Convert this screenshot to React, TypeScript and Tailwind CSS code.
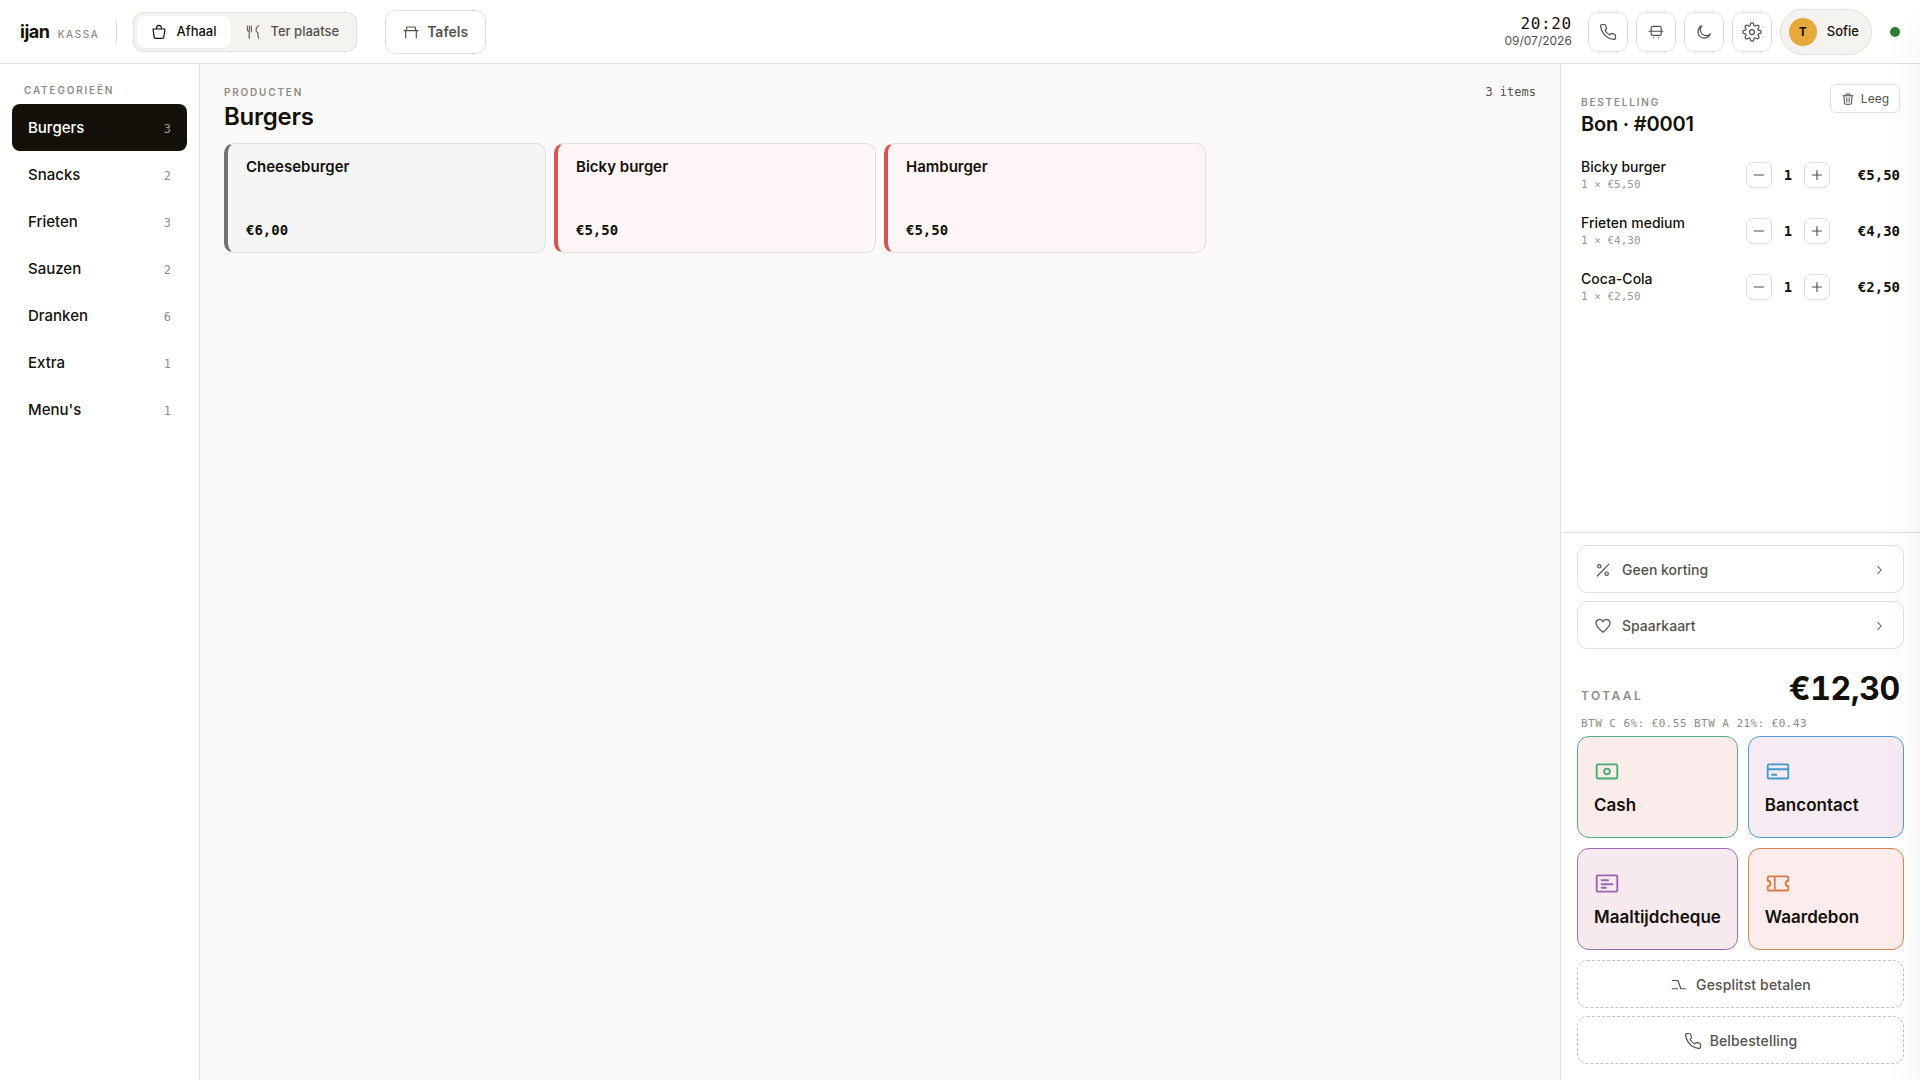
import React from "react";

const MONO = "font-['DejaVu_Sans_Mono',monospace]";

const categories = [
  { name: "Burgers", count: 3 },
  { name: "Snacks", count: 2 },
  { name: "Frieten", count: 3 },
  { name: "Sauzen", count: 2 },
  { name: "Dranken", count: 6 },
  { name: "Extra", count: 1 },
  { name: "Menu's", count: 1 },
];

const products = [
  { name: "Cheeseburger", price: "€6,00", tone: "border-l-[#73716d] bg-[#f5f5f6]" },
  { name: "Bicky burger", price: "€5,50", tone: "border-l-[#d9534f] bg-[#fdf5f6]" },
  { name: "Hamburger", price: "€5,50", tone: "border-l-[#d9534f] bg-[#fdf5f6]" },
];

const lines = [
  { name: "Bicky burger", price: "€5,50" },
  { name: "Frieten medium", price: "€4,30" },
  { name: "Coca-Cola", price: "€2,50" },
];

type IconProps = { className?: string; children: React.ReactNode; width?: number };

function Icon({ className = "size-4", width = 1.5, children }: IconProps) {
  return (
    <svg
      viewBox="0 0 24 24"
      fill="none"
      stroke="currentColor"
      strokeWidth={width}
      strokeLinecap="round"
      strokeLinejoin="round"
      className={`shrink-0 ${className}`}
      aria-hidden="true"
    >
      {children}
    </svg>
  );
}

function PhoneIcon({ className = "size-[18px]" }: { className?: string }) {
  return (
    <Icon className={className} width={1.6}>
      <path d="M22 16.92v3a2 2 0 0 1-2.18 2 19.79 19.79 0 0 1-8.63-3.07 19.5 19.5 0 0 1-6-6 19.79 19.79 0 0 1-3.07-8.67A2 2 0 0 1 4.11 2h3a2 2 0 0 1 2 1.72 12.84 12.84 0 0 0 .7 2.81 2 2 0 0 1-.45 2.11L8.09 9.91a16 16 0 0 0 6 6l1.27-1.27a2 2 0 0 1 2.11-.45 12.84 12.84 0 0 0 2.81.7A2 2 0 0 1 22 16.92z" />
    </Icon>
  );
}

const payments = [
  {
    name: "Cash",
    tone: "border-[#4fb07a] bg-[#fbecec]",
    color: "text-[#45ad72]",
    icon: (
      <>
        <rect x="2.5" y="5" width="19" height="13" rx="1" />
        <circle cx="12" cy="11.5" r="2.6" />
      </>
    ),
  },
  {
    name: "Bancontact",
    tone: "border-[#4a9fd0] bg-[#f6ebf2]",
    color: "text-[#4499cc]",
    icon: (
      <>
        <rect x="2.5" y="5" width="19" height="13" rx="1" />
        <path d="M2.5 9.5h19M6.5 14.5h4" />
      </>
    ),
  },
  {
    name: "Maaltijdcheque",
    tone: "border-[#9b6fb8] bg-[#f6eaef]",
    color: "text-[#9666b5]",
    icon: (
      <>
        <rect x="2.5" y="4" width="19" height="15" rx="1" />
        <path d="M7 8.5h6M7 12.2h10M7 15.5h4" />
      </>
    ),
  },
  {
    name: "Waardebon",
    tone: "border-[#d98452] bg-[#fcecec]",
    color: "text-[#d97b45]",
    icon: (
      <>
        <path d="M2.5 6.5a1.5 1.5 0 0 1 1.5-1.5h16a1.5 1.5 0 0 1 1.5 1.5v2.5a2.5 2.5 0 0 0 0 5v2.5a1.5 1.5 0 0 1-1.5 1.5h-16a1.5 1.5 0 0 1-1.5-1.5v-2.5a2.5 2.5 0 0 0 0-5z" />
        <path d="M9 6.5v10" />
      </>
    ),
  },
];

const headerButtons = [
  { label: "Bellen", icon: <PhoneIcon /> },
  {
    label: "Printer",
    icon: (
      <Icon className="size-[18px]" width={1.6}>
        <path d="M5.5 11V7a2.5 2.5 0 0 1 2.5-2.5h8.5A2.5 2.5 0 0 1 19 7v4M2.7 11h18.6M5.5 11v3.5a2 2 0 0 0 2 2H17a2 2 0 0 0 2-2V11M8.5 19.8v.01M15.5 19.8v.01" />
      </Icon>
    ),
  },
  {
    label: "Donkere modus",
    icon: (
      <Icon className="size-[18px]" width={1.6}>
        <path d="M20.5 14.5A8.5 8.5 0 1 1 9.2 3.8a7.5 7.5 0 0 0 11.3 10.7z" />
      </Icon>
    ),
  },
  {
    label: "Instellingen",
    icon: (
      <Icon className="size-5">
        <circle cx="12" cy="12" r="3" />
        <path d="M19.4 15a1.65 1.65 0 0 0 .33 1.82l.06.06a2 2 0 1 1-2.83 2.83l-.06-.06a1.65 1.65 0 0 0-2.82 1.18V21a2 2 0 1 1-4 0v-.09A1.65 1.65 0 0 0 7.2 19.7l-.06.06a2 2 0 1 1-2.83-2.83l.06-.06A1.65 1.65 0 0 0 3.1 14H3a2 2 0 1 1 0-4h.09A1.65 1.65 0 0 0 4.3 7.2l-.06-.06a2 2 0 1 1 2.83-2.83l.06.06A1.65 1.65 0 0 0 10 3.09V3a2 2 0 1 1 4 0v.09a1.65 1.65 0 0 0 2.82 1.18l.06-.06a2 2 0 1 1 2.83 2.83l-.06.06A1.65 1.65 0 0 0 20.91 10H21a2 2 0 1 1 0 4h-.09a1.65 1.65 0 0 0-1.51 1z" />
      </Icon>
    ),
  },
];

function Header() {
  return (
    <header className="flex h-16 shrink-0 items-center border-b border-[#e2e0dc] bg-white px-5">
      <div className="flex items-baseline gap-2">
        <span className="text-lg font-bold tracking-tight">ijan</span>
        <span className="text-[10px] font-medium tracking-[0.16em] text-[#8f8c85]">KASSA</span>
      </div>
      <div className="ml-4 h-6 w-px bg-[#e2e0dc]" />
      <div className="ml-4 flex rounded-[10px] border border-[#e2e0dc] bg-[#f4f3f0] p-[3px]">
        <button className="flex h-8 items-center gap-[10px] rounded-lg bg-white px-[14px] text-[13px] font-medium shadow-xs">
          <Icon className="size-4" width={1.8}>
            <path d="M3 7.5h18l-1.8 12.2a2 2 0 0 1-2 1.8H6.8a2 2 0 0 1-2-1.8zM8.5 7.5V5.5a3.5 3.5 0 0 1 7 0v2" />
          </Icon>
          Afhaal
        </button>
        <button className="flex h-8 items-center gap-[10px] rounded-lg px-[14px] text-[13px] font-medium text-[#55524c]">
          <Icon className="size-4" width={1.6}>
            <path d="M3.5 3v5.5c0 2 1.5 2.5 3 3v2c-.5 2-.5 5 0 8M6.5 3v6.5M9.5 3v8.5M20.5 2.5c-3 1-4.5 5-3.5 8.5.3 1 1.5 1.5 2.5 2-.5 2.5 0 6 1 8.5" />
          </Icon>
          Ter plaatse
        </button>
      </div>
      <button className="ml-7 flex h-11 items-center gap-2 rounded-[10px] border border-[#e2e0dc] px-[17px] text-sm font-semibold text-[#55524c]">
        <Icon className="size-4" width={1.8}>
          <path d="M1.5 10h21M4 10v10.5M20 10v10.5M4.5 10l1.5-5.5h12l1.5 5.5" />
        </Icon>
        Tafels
      </button>

      <div className="ml-auto flex items-center">
        <div className="mr-4 flex flex-col items-end">
          <time className={`text-base leading-[18px] tracking-[0.04em] ${MONO}`}>20:20</time>
          <span className="text-xs leading-4 text-[#55524c]">09/07/2026</span>
        </div>
        <div className="flex items-center gap-2">
          {headerButtons.map((b) => (
            <button
              key={b.label}
              aria-label={b.label}
              className="grid size-10 place-items-center rounded-[10px] border border-[#e2e0dc] text-[#55524c]"
            >
              {b.icon}
            </button>
          ))}
          <button className="flex h-[46px] items-center gap-[10px] rounded-full border border-[#e2e0dc] bg-[#f4f3f0] pr-3 pl-2 text-[13px] font-medium">
            <span className="grid size-7 place-items-center rounded-full bg-[#e8a93c] text-xs font-bold">T</span>
            Sofie
          </button>
        </div>
        <span className="ml-[18px] size-[10px] rounded-full bg-[#2e7d32]" />
      </div>
    </header>
  );
}

function Sidebar() {
  return (
    <aside className="flex w-[200px] shrink-0 flex-col border-r border-[#e2e0dc] bg-white px-3 pt-[18px]">
      <h2 className="mb-[6px] px-3 text-[10px] leading-4 font-semibold tracking-[0.18em] text-[#8f8c85]">CATEGORIEËN</h2>
      <nav className="flex flex-col">
        {categories.map((c, i) => (
          <button
            key={c.name}
            className={`flex h-[47px] items-center justify-between rounded-lg px-4 pt-[2px] text-[15px] font-medium ${
              i === 0 ? "bg-[#14110b] text-white" : ""
            }`}
          >
            {c.name}
            <span className={`text-xs ${MONO} ${i === 0 ? "text-[#a09e99]" : "text-[#8f8c85]"}`}>{c.count}</span>
          </button>
        ))}
      </nav>
    </aside>
  );
}

function Products() {
  return (
    <main className="flex min-w-0 flex-1 flex-col bg-[#fbfaf9] px-6 pt-5">
      <div className="flex items-start justify-between">
        <div>
          <p className="text-[10px] leading-4 font-semibold tracking-[0.18em] text-[#8f8c85]">PRODUCTEN</p>
          <h1 className="text-2xl leading-[34px] font-semibold tracking-[-0.01em]">Burgers</h1>
        </div>
        <span className={`text-xs leading-4 text-[#55524c] ${MONO}`}>3 items</span>
      </div>
      <div className="mt-[9px] grid grid-cols-4 gap-2">
        {products.map((p) => (
          <button
            key={p.name}
            className={`flex h-[110px] flex-col items-start justify-between rounded-[10px] border border-l-4 border-[#e2e0dc] px-[18px] py-3 ${p.tone}`}
          >
            <span className="text-[15px] leading-[22px] font-semibold">{p.name}</span>
            <span className={`text-sm leading-5 font-bold ${MONO}`}>{p.price}</span>
          </button>
        ))}
      </div>
    </main>
  );
}

function Order() {
  return (
    <aside className="flex w-[360px] shrink-0 flex-col border-l border-[#e2e0dc] bg-white">
      <div className="flex items-start justify-between px-5 pt-5">
        <div className="pt-[10px]">
          <p className="text-[10px] leading-4 font-semibold tracking-[0.18em] text-[#8f8c85]">BESTELLING</p>
          <h2 className="text-xl leading-7 font-semibold tracking-[-0.01em]">Bon · #0001</h2>
        </div>
        <button className="flex h-[29px] items-center gap-[6px] rounded-md border border-[#e2e0dc] px-[10px] text-xs text-[#55524c]">
          <Icon className="size-[14px]" width={1.8}>
            <path d="M3.5 6.5h17M9 6.5V3.5h6v3M5 6.5l1 12.5a2 2 0 0 0 2 2h8a2 2 0 0 0 2-2l1-12.5M10 10v7M14 10v7" />
          </Icon>
          Leeg
        </button>
      </div>

      <ul className="flex min-h-0 flex-1 flex-col px-5 pt-[9px]">
        {lines.map((l) => (
          <li key={l.name} className="flex h-14 items-center">
            <div className="flex-1">
              <p className="text-sm leading-5 font-medium">{l.name}</p>
              <p className={`text-[11px] leading-4 text-[#9b9892] ${MONO}`}>1 × {l.price}</p>
            </div>
            <div className="flex items-center">
              <button aria-label={`Minder ${l.name}`} className="grid size-[26px] place-items-center rounded-md border border-[#e2e0dc] text-[#55524c]">
                <Icon className="size-3" width={2.4}><path d="M3 12h18" /></Icon>
              </button>
              <span className={`w-8 text-center text-sm font-bold ${MONO}`}>1</span>
              <button aria-label={`Meer ${l.name}`} className="grid size-[26px] place-items-center rounded-md border border-[#e2e0dc] text-[#55524c]">
                <Icon className="size-3" width={2.4}><path d="M3 12h18M12 3v18" /></Icon>
              </button>
            </div>
            <span className={`w-[70px] text-right text-sm font-bold ${MONO}`}>{l.price}</span>
          </li>
        ))}
      </ul>

      <div className="flex flex-col border-t border-[#e2e0dc] px-4 pt-3 pb-4">
        <div className="flex flex-col gap-2">
          <button className="flex h-12 items-center gap-[11px] rounded-[10px] border border-[#e2e0dc] px-[17px] pt-[2px] text-sm font-medium text-[#55524c]">
            <Icon className="size-4" width={1.8}>
              <path d="M20.5 3.5L3.5 21" />
              <circle cx="6.5" cy="6.5" r="2.5" />
              <circle cx="17.5" cy="17.5" r="2.5" />
            </Icon>
            <span className="flex-1 text-left">Geen korting</span>
            <Icon className="size-[14px]" width={1.8}><path d="M10 6l6 6-6 6" /></Icon>
          </button>
          <button className="flex h-12 items-center gap-[11px] rounded-[10px] border border-[#e2e0dc] px-[17px] pt-[2px] text-sm font-medium text-[#55524c]">
            <Icon className="size-4" width={1.8}>
              <path d="M12 21.5C8 18 1.5 13 1.5 8a5.5 5.5 0 0 1 10.5-2.5A5.5 5.5 0 0 1 22.5 8c0 5-6.5 10-10.5 13.5z" />
            </Icon>
            <span className="flex-1 text-left">Spaarkaart</span>
            <Icon className="size-[14px]" width={1.8}><path d="M10 6l6 6-6 6" /></Icon>
          </button>
        </div>
        <div className="mt-5 flex items-baseline justify-between px-1">
          <span className="text-xs font-semibold tracking-[0.2em] text-[#8f8c85]">TOTAAL</span>
          <span className="text-[32px] leading-10 font-bold tracking-[-0.01em] tabular-nums">€12,30</span>
        </div>
        <p className={`mt-[7px] px-1 text-[11px] leading-4 tracking-[0.04em] text-[#8f8c85] ${MONO}`}>BTW C 6%: €0.55 BTW A 21%: €0.43</p>
        <div className="mt-1 grid grid-cols-[auto_1fr] gap-[10px]">
          {payments.map((p) => (
            <button key={p.name} className={`flex h-[102px] flex-col items-start justify-center gap-2 rounded-xl border px-4 pt-[2px] ${p.tone}`}>
              <Icon className={`size-[26px] ${p.color}`} width={1.7}>{p.icon}</Icon>
              <span className="text-[17px] leading-6 font-semibold">{p.name}</span>
            </button>
          ))}
        </div>
        <button className="mt-[10px] flex h-12 items-center justify-center gap-2 rounded-[10px] border border-dashed border-[#c4c2bd] pt-[2px] text-sm font-medium tracking-[0.01em] text-[#55524c]">
          <Icon className="size-[18px]" width={1.6}><path d="M3 6h7.5l4 11H21M3 17h7" /></Icon>
          Gesplitst betalen
        </button>
        <button className="mt-2 flex h-12 items-center justify-center gap-2 rounded-[10px] border border-dashed border-[#c4c2bd] pt-[2px] text-sm font-medium tracking-[0.01em] text-[#55524c]">
          <PhoneIcon />
          Belbestelling
        </button>
      </div>
    </aside>
  );
}

export default function App() {
  return (
    <div className="relative flex h-screen flex-col overflow-hidden bg-white font-[Inter,sans-serif] text-[#14110b]">
      <Header />
      <div className="flex min-h-0 flex-1">
        <Sidebar />
        <Products />
        <Order />
      </div>
      <div className="pointer-events-none absolute inset-y-0 left-full w-96 shadow-[0_24px_48px_-12px_rgba(0,0,0,0.1)]" />
    </div>
  );
}
